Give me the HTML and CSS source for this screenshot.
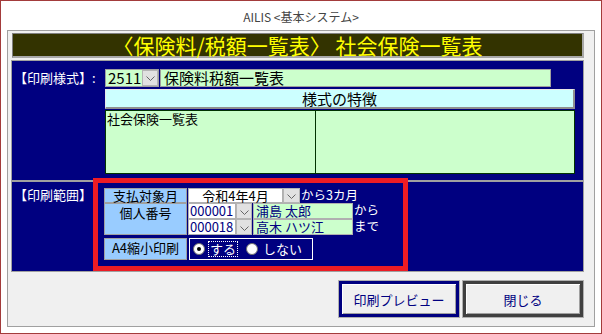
FILE: index.html
```html
<!DOCTYPE html>
<html>
<head>
    <meta charset="utf-8">
    <link rel="stylesheet" href="styles.css">
</head>
<body>
<div class="window">
    <div class="titlebar">AILIS &lt;基本システム&gt;</div>
    <div class="frame">
        <div class="banner">〈保険料/税額一覧表〉 社会保険一覧表</div>

        <div class="panel style-panel">
            <div class="panel-label">【印刷様式】:</div>
            <div class="style-body">
                <div class="combo-row">
                    <div class="combo">
                        <span class="combo-text">2511</span>
                        <span class="drop"><svg width="9" height="5" viewBox="0 0 9 5"><polyline points="0.5,0.5 4.5,4.5 8.5,0.5" fill="none" stroke="#666" stroke-width="1"/></svg></span>
                    </div>
                    <div class="name-field">保険料税額一覧表</div>
                </div>
                <div class="feature-head">様式の特徴</div>
                <div class="feature-body">
                    <div class="feature-col">社会保険一覧表</div>
                    <div class="feature-col"></div>
                </div>
            </div>
        </div>

        <div class="panel range-panel">
            <div class="panel-label">【印刷範囲】</div>
            <div class="range-body">
                <div class="range-table">
                    <div class="cell-label">支払対象月</div>
                    <div class="value-row">
                        <div class="field date-field">令和4年4月</div>
                        <span class="drop wide"><svg width="9" height="5" viewBox="0 0 9 5"><polyline points="0.5,0.5 4.5,4.5 8.5,0.5" fill="none" stroke="#666" stroke-width="1"/></svg></span>
                        <span class="suffix">から3カ月</span>
                    </div>

                    <div class="cell-label tall">個人番号</div>
                    <div class="value-row">
                        <div class="field code-field">000001</div>
                        <span class="drop"><svg width="9" height="5" viewBox="0 0 9 5"><polyline points="0.5,0.5 4.5,4.5 8.5,0.5" fill="none" stroke="#666" stroke-width="1"/></svg></span>
                        <div class="field person-field">浦島 太郎</div>
                        <span class="suffix">から</span>
                    </div>
                    <div class="value-row">
                        <div class="field code-field">000018</div>
                        <span class="drop"><svg width="9" height="5" viewBox="0 0 9 5"><polyline points="0.5,0.5 4.5,4.5 8.5,0.5" fill="none" stroke="#666" stroke-width="1"/></svg></span>
                        <div class="field person-field">高木 ハツ江</div>
                        <span class="suffix">まで</span>
                    </div>
                </div>

                <div class="shrink-row">
                    <div class="cell-label shrink-label">A4縮小印刷</div>
                    <div class="radio-box">
                        <span class="radio checked"></span>
                        <span class="radio-text focused">する</span>
                        <span class="radio"></span>
                        <span class="radio-text">しない</span>
                    </div>
                </div>
            </div>
        </div>

        <div class="buttons">
            <button class="btn btn-default">印刷プレビュー</button>
            <button class="btn btn-close">閉じる</button>
        </div>
    </div>
    <div class="highlight"></div>
</div>
</body>
</html>
```

FILE: styles.css
```css
* {
    box-sizing: border-box;
}

body {
    margin: 0;
    font-family: "Noto Sans CJK JP", "Noto Sans", sans-serif;
}

.window {
    position: relative;
    width: 602px;
    height: 334px;
    border: 1px solid #a33b3b;
    background: #ffffff;
}

.titlebar {
    height: 29px;
    padding-top: 4px;
    line-height: 24px;
    text-align: center;
    font-size: 12px;
    color: #444444;
}

.frame {
    margin: 0 6px;
    height: 297px;
    border: 1px solid #a0a0a0;
    background: #f0f0f0;
    padding: 2px 10px 0 3px;
}

.banner {
    margin-left: 1px;
    height: 25px;
    background: #333300;
    border: 1px solid #808080;
    border-right: 2px solid #a8a8a8;
    border-bottom: 2px solid #a8a8a8;
    color: #ffff00;
    font-size: 21px;
    line-height: 22px;
    text-align: center;
    white-space: nowrap;
}

.panel {
    display: grid;
    background: #000080;
    border: 1px solid #a0a0a0;
}

.panel-label {
    color: #ffffff;
    font-size: 13px;
    padding-left: 2px;
    white-space: nowrap;
}

/* 印刷様式 */
.style-panel {
    margin-top: 2px;
    height: 121px;
    grid-template-columns: 93px 1fr;
    padding-top: 8px;
}

.style-panel .panel-label {
    line-height: 18px;
}

.combo-row {
    display: flex;
    height: 18px;
}

.combo {
    display: flex;
    width: 54px;
    border: 1px solid #a0a0a0;
    background: #ccffcc;
}

.combo-text {
    flex: 1;
    font-size: 15px;
    line-height: 16px;
    padding-left: 2px;
}

.drop {
    display: flex;
    flex-shrink: 0;
    align-items: flex-end;
    justify-content: center;
    width: 16px;
    padding-bottom: 4px;
    background: #e1e1e1;
    border: 1px solid #b4b4b4;
}

.drop.wide {
    width: 17px;
}

.name-field {
    margin-left: 1px;
    width: 391px;
    border: 1px solid #a0a0a0;
    background: #ccffcc;
    font-size: 15px;
    line-height: 16px;
    padding-left: 3px;
}

.feature-head {
    margin-top: 2px;
    width: 470px;
    height: 20px;
    background: #ccffff;
    border-top: 1px solid #e8e8e8;
    border-left: 1px solid #e8e8e8;
    border-right: 2px solid #909090;
    border-bottom: 2px solid #909090;
    font-size: 15px;
    line-height: 17px;
    text-align: center;
}

.feature-body {
    display: grid;
    grid-template-columns: 210px 1fr;
    margin-top: 1px;
    width: 470px;
    height: 64px;
    border: 1px solid #003300;
    background: #ccffcc;
}

.feature-col {
    font-size: 13px;
    line-height: 16px;
    padding-left: 1px;
}

.feature-col:first-child {
    border-right: 1px solid #003300;
}

/* 印刷範囲 */
.range-panel {
    height: 91px;
    grid-template-columns: 92px 1fr;
    padding-top: 6px;
}

.range-panel .panel-label {
    line-height: 14px;
}

.range-table {
    display: grid;
    grid-template-columns: 83px auto;
    grid-template-rows: 15px 16px 16px;
}

.cell-label {
    background: #99ccff;
    border: 1px solid #a0a0a0;
    font-size: 13px;
    line-height: 13px;
    text-align: center;
    color: #000000;
    white-space: nowrap;
}

.cell-label.tall {
    grid-row: span 2;
    padding-top: 2px;
}

.value-row {
    display: flex;
    padding-left: 1px;
}

.field {
    flex-shrink: 0;
    border: 1px solid #b0b0b0;
    font-size: 13px;
    line-height: 13px;
    white-space: nowrap;
}

.date-field {
    width: 95px;
    background: #ffffff;
    text-align: center;
    color: #000000;
}

.code-field {
    width: 48px;
    background: #ffffff;
    color: #000080;
    padding-left: 1px;
}

.person-field {
    margin-left: 1px;
    width: 100px;
    background: #ccffcc;
    color: #000080;
    padding-left: 2px;
}

.value-row .drop {
    padding-bottom: 3px;
}

.suffix {
    color: #ffffff;
    font-size: 12.5px;
    line-height: 13px;
    padding-left: 1px;
    white-space: nowrap;
}

.shrink-row {
    display: flex;
    margin-top: 3px;
    height: 22px;
}

.shrink-label {
    width: 83px;
    line-height: 18px;
}

.radio-box {
    display: flex;
    align-items: center;
    margin-left: 2px;
    width: 124px;
    border: 1px solid #ffffff;
    padding-left: 3px;
}

.radio {
    position: relative;
    flex-shrink: 0;
    width: 12px;
    height: 12px;
    border-radius: 50%;
    background: #ffffff;
    border: 1px solid #707070;
}

.radio.checked::after {
    content: "";
    position: absolute;
    left: 3px;
    top: 3px;
    width: 4px;
    height: 4px;
    border-radius: 50%;
    background: #000000;
}

.radio-text {
    flex-shrink: 0;
    white-space: nowrap;
    color: #ffffff;
    font-size: 13px;
    line-height: 12px;
    margin-left: 3px;
    margin-right: 8px;
    padding: 1px 1px;
    border: 1px dotted transparent;
}

.radio-text.focused {
    border-color: #ffffff;
}

/* buttons */
.buttons {
    display: flex;
    justify-content: flex-end;
    gap: 4px;
    margin-top: 9px;
    padding-right: 1px;
}

.btn {
    width: 120px;
    height: 36px;
    background: #f0f0f0;
    color: #000080;
    font-family: "Noto Sans CJK JP", sans-serif;
    font-size: 13px;
    box-shadow: 0 0 0 1px #b0b0b0, inset 1px 1px 0 #ffffff, inset -1px -1px 0 #a0a0a0;
}

.btn-default {
    border: 3px solid #000080;
}

.btn-close {
    border: 3px solid #404040;
}

/* 注目枠 */
.highlight {
    position: absolute;
    left: 92px;
    top: 177px;
    width: 315px;
    height: 93px;
    border: 5px solid #ed1c24;
}
```
